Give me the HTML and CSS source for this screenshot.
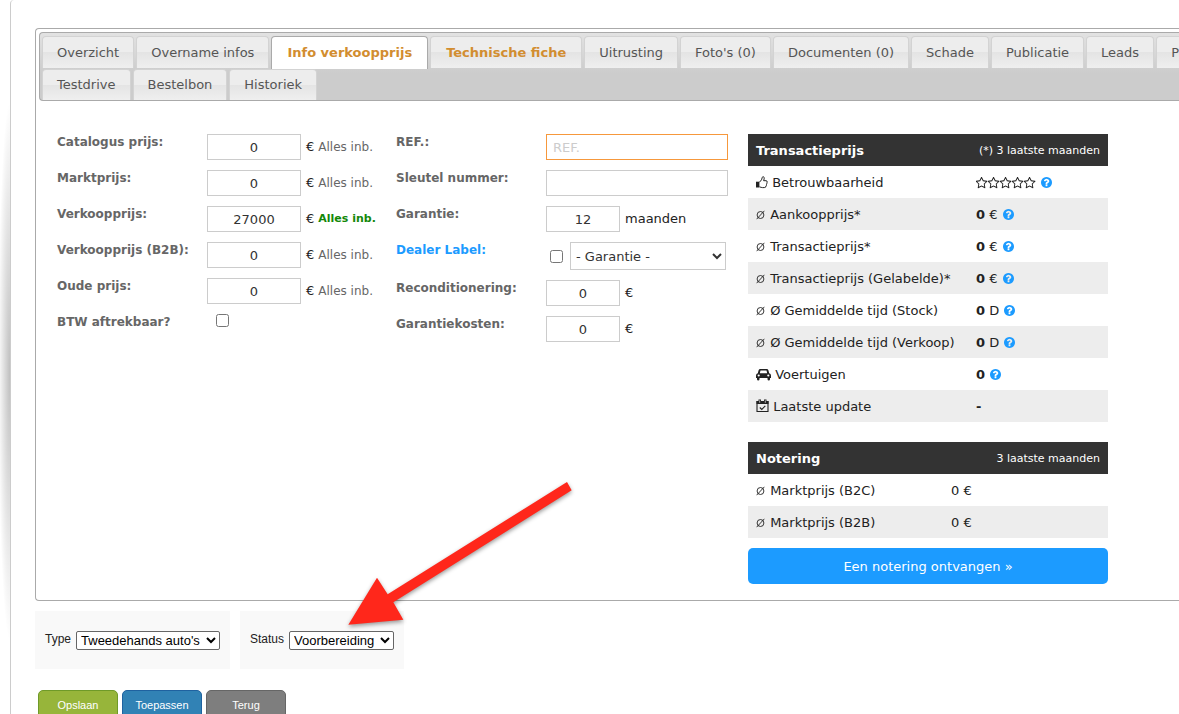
FILE: index.html
```html
<!DOCTYPE html>
<html lang="nl">
  <head>
    <meta charset="UTF-8" />
    <meta name="viewport" content="width=device-width, initial-scale=1.0" />
    <title>Info verkoopprijs</title>
    <link rel="stylesheet" href="styles.css">
  </head>
  <body>
    <!-- Iconen -->
    <svg class="sprite" aria-hidden="true">
      <symbol id="star" viewBox="64 64 1664 1664">
        <path d="M1137 1004l306-297-422-62-189-382-189 382-422 62 306 297-73 421 378-199 377 199zm527-357q0 22-26 48l-363 354 86 500q1 7 1 20 0 50-41 50-19 0-40-12l-449-236-449 236q-22 12-40 12-21 0-31.500-14.500t-10.500-35.500q0-6 2-20l86-500-364-354q-25-27-25-48 0-37 56-46l502-73 225-455q19-41 49-41t49 41l225 455 502 73q56 9 56 46z" />
      </symbol>
      <symbol id="help" viewBox="128 128 1536 1536">
        <path d="M1024 1376v-192q0-14-9-23t-23-9h-192q-14 0-23 9t-9 23v192q0 14 9 23t23 9h192q14 0 23-9t9-23zm256-672q0-88-55.500-163t-138.500-116-170-41q-243 0-371 213-15 24 8 42l132 100q7 6 19 6 16 0 25-12 53-68 86-92 34-24 86-24 48 0 85.500 26t37.500 59q0 38-20 61t-68 45q-63 28-115.500 86.500t-52.500 125.500v36q0 14 9 23t23 9h192q14 0 23-9t9-23q0-19 21.500-49.500t54.500-49.500q32-18 49-28.500t46-35 44.500-48 28-60.500 12.500-81zm384 192q0 209-103 385.500t-279.500 279.500-385.500 103-385.500-103-279.500-279.500-103-385.500 103-385.500 279.500-279.500 385.500-103 385.500 103 279.500 279.500 103 385.500z" />
      </symbol>
      <symbol id="avg" viewBox="0 0 9 10">
        <ellipse cx="4.500" cy="5" rx="3.400" ry="3.500" fill="none" stroke="currentColor" stroke-width="0.900" />
        <path d="M0.600 9.200L8.400 0.800" stroke="currentColor" stroke-width="0.900" />
      </symbol>
      <symbol id="thumb" viewBox="0 0 12 13">
        <path d="M3.500 6.200L5.500 3.800L6.300 1.400Q6.500 .6 7.200 .7Q8.600 1 8.200 2.800L7.600 4.700H10Q11.300 4.800 11.200 6Q11.100 6.700 10.700 7Q11.100 7.800 10.500 8.500Q10.700 9.400 10 10Q10 11.600 8.300 11.600H6.500Q5.200 11.500 3.500 10.800" fill="none" stroke="currentColor" />
        <path d="M0 5.700H3.400V11.500H0Z" />
      </symbol>
      <symbol id="car" viewBox="0 0 15 13">
        <path fill-rule="evenodd" d="M4.300 1H10.700Q12 1 12.400 2.300L13.200 5.300Q15 5.600 15 7.400V10H14V11.200Q13.900 12.400 12.800 12.400Q11.600 12.400 11.500 11.200V10H3.500V11.200Q3.400 12.400 2.200 12.400Q1.100 12.400 1 11.200V10H0V7.400Q0 5.600 1.800 5.300L2.600 2.300Q3 1 4.300 1ZM4.500 2.600L3.800 5.200H11.200L10.500 2.600ZM2.700 6.400A1.100 1.100 0 1 0 2.700 8.600A1.100 1.100 0 1 0 2.700 6.400ZM12.300 6.400A1.100 1.100 0 1 0 12.300 8.600A1.100 1.100 0 1 0 12.300 6.400Z" />
      </symbol>
      <symbol id="calendar" viewBox="0 0 13 14">
        <path d="M1 2.500H12V12.500H1Z" fill="none" stroke="currentColor" stroke-width="1.100" />
        <path d="M.5 2H12.500V5H.5ZM2.500 .5H5V3H2.500ZM8 .5H10.500V3H8Z" />
        <path d="M3.700 1.300V3.800M9.300 1.300V3.800" stroke="#ededed" stroke-width=".7" />
        <path d="M3.800 8.500L5.800 10.500L9.300 6.900" fill="none" stroke="currentColor" stroke-width="1.100" />
      </symbol>
    </svg>

    <div class="page">
      <div class="tabs">
        <!-- Tabbladen -->
        <nav class="tabs-nav">
          <ul class="tab-row tab-row-main">
            <li><a href="#overzicht">Overzicht</a></li>
            <li><a href="#overname">Overname infos</a></li>
            <li class="active"><a href="#verkoopprijs">Info verkoopprijs</a></li>
            <li class="required"><a href="#fiche">Technische fiche</a></li>
            <li><a href="#uitrusting">Uitrusting</a></li>
            <li><a href="#fotos">Foto's (0)</a></li>
            <li><a href="#documenten">Documenten (0)</a></li>
            <li><a href="#schade">Schade</a></li>
            <li><a href="#publicatie">Publicatie</a></li>
            <li><a href="#leads">Leads</a></li>
            <li><a href="#p">P</a></li>
          </ul>
          <ul class="tab-row">
            <li><a href="#testdrive">Testdrive</a></li>
            <li><a href="#bestelbon">Bestelbon</a></li>
            <li><a href="#historiek">Historiek</a></li>
          </ul>
        </nav>

        <div class="tab-panel" id="verkoopprijs">
          <!-- Prijzen -->
          <div class="form-column prices">
            <div class="form-row">
              <label for="catalogus">Catalogus prijs:</label>
              <div class="field"><input type="text" class="price" id="catalogus" value="0" /> € <span class="vat">Alles inb.</span></div>
            </div>
            <div class="form-row">
              <label for="markt">Marktprijs:</label>
              <div class="field"><input type="text" class="price" id="markt" value="0" /> € <span class="vat">Alles inb.</span></div>
            </div>
            <div class="form-row">
              <label for="verkoop">Verkoopprijs:</label>
              <div class="field"><input type="text" class="price" id="verkoop" value="27000" /> € <span class="vat vat-active">Alles inb.</span></div>
            </div>
            <div class="form-row">
              <label for="verkoop-b2b">Verkoopprijs (B2B):</label>
              <div class="field"><input type="text" class="price" id="verkoop-b2b" value="0" /> € <span class="vat">Alles inb.</span></div>
            </div>
            <div class="form-row">
              <label for="oude">Oude prijs:</label>
              <div class="field"><input type="text" class="price" id="oude" value="0" /> € <span class="vat">Alles inb.</span></div>
            </div>
            <div class="form-row">
              <label for="btw">BTW aftrekbaar?</label>
              <div class="field check-field"><input type="checkbox" id="btw" /></div>
            </div>
          </div>

          <!-- Garantie en kosten -->
          <div class="form-column details">
            <div class="form-row">
              <label for="ref">REF.:</label>
              <div class="field"><input type="text" class="wide highlight" id="ref" placeholder="REF." /></div>
            </div>
            <div class="form-row">
              <label for="sleutel">Sleutel nummer:</label>
              <div class="field"><input type="text" class="wide" id="sleutel" /></div>
            </div>
            <div class="form-row">
              <label for="garantie">Garantie:</label>
              <div class="field"><input type="text" class="short" id="garantie" value="12" /> maanden</div>
            </div>
            <div class="form-row">
              <label for="dealer" class="link-label">Dealer Label:</label>
              <div class="field dealer-field">
                <input type="checkbox" id="dealer" />
                <select class="warranty" aria-label="Garantie label"><option>- Garantie -</option></select>
              </div>
            </div>
            <div class="form-row">
              <label for="recond">Reconditionering:</label>
              <div class="field"><input type="text" class="short" id="recond" value="0" /> €</div>
            </div>
            <div class="form-row">
              <label for="kosten">Garantiekosten:</label>
              <div class="field"><input type="text" class="short" id="kosten" value="0" /> €</div>
            </div>
          </div>

          <!-- Marktgegevens -->
          <div class="market">
            <table class="market-table transactions">
              <thead>
                <tr><th>Transactieprijs</th><th class="period">(*) 3 laatste maanden</th></tr>
              </thead>
              <tbody>
                <tr>
                  <td><svg class="icon-thumb"><use href="#thumb" /></svg> Betrouwbaarheid</td>
                  <td><span class="stars"><svg><use href="#star" /></svg><svg><use href="#star" /></svg><svg><use href="#star" /></svg><svg><use href="#star" /></svg><svg><use href="#star" /></svg></span> <svg class="icon-help"><use href="#help" /></svg></td>
                </tr>
                <tr>
                  <td><svg class="icon-avg"><use href="#avg" /></svg> Aankoopprijs*</td>
                  <td><b>0</b> € <svg class="icon-help"><use href="#help" /></svg></td>
                </tr>
                <tr>
                  <td><svg class="icon-avg"><use href="#avg" /></svg> Transactieprijs*</td>
                  <td><b>0</b> € <svg class="icon-help"><use href="#help" /></svg></td>
                </tr>
                <tr>
                  <td><svg class="icon-avg"><use href="#avg" /></svg> Transactieprijs (Gelabelde)*</td>
                  <td><b>0</b> € <svg class="icon-help"><use href="#help" /></svg></td>
                </tr>
                <tr>
                  <td><svg class="icon-avg"><use href="#avg" /></svg> Ø Gemiddelde tijd (Stock)</td>
                  <td><b>0</b> D <svg class="icon-help"><use href="#help" /></svg></td>
                </tr>
                <tr>
                  <td><svg class="icon-avg"><use href="#avg" /></svg> Ø Gemiddelde tijd (Verkoop)</td>
                  <td><b>0</b> D <svg class="icon-help"><use href="#help" /></svg></td>
                </tr>
                <tr>
                  <td><svg class="icon-car"><use href="#car" /></svg> Voertuigen</td>
                  <td><b>0</b> <svg class="icon-help"><use href="#help" /></svg></td>
                </tr>
                <tr>
                  <td><svg class="icon-calendar"><use href="#calendar" /></svg> Laatste update</td>
                  <td><b>-</b></td>
                </tr>
              </tbody>
            </table>

            <table class="market-table quotes">
              <thead>
                <tr><th>Notering</th><th class="period">3 laatste maanden</th></tr>
              </thead>
              <tbody>
                <tr><td><svg class="icon-avg"><use href="#avg" /></svg> Marktprijs (B2C)</td><td>0 €</td></tr>
                <tr><td><svg class="icon-avg"><use href="#avg" /></svg> Marktprijs (B2B)</td><td>0 €</td></tr>
              </tbody>
            </table>

            <button type="button" class="quote-button">Een notering ontvangen »</button>
          </div>
        </div>
      </div>

      <!-- Type en status -->
      <div class="options">
        <div class="option-box">
          <label for="type">Type</label>
          <select id="type" class="type-select"><option>Tweedehands auto's</option></select>
        </div>
        <div class="option-box">
          <label for="status">Status</label>
          <select id="status" class="status-select"><option>Voorbereiding</option></select>
        </div>
      </div>

      <div class="actions">
        <button type="submit" class="save">Opslaan</button>
        <button type="button" class="apply">Toepassen</button>
        <button type="button" class="back">Terug</button>
      </div>
    </div>

    <!-- Pijl naar de status -->
    <svg class="arrow" viewBox="0 0 750 510" aria-hidden="true">
      <path d="M25 464L111 323L143 373L681 36L695 61L160 397L190 449Z" />
    </svg>
  </body>
</html>
```

FILE: styles.css
```css
* {
  box-sizing: border-box;
}

body {
  position: relative;
  margin: 0;
  height: 100vh;
  overflow: hidden;
  background: radial-gradient(ellipse 12px 270px at 10px 52%, rgba(0, 0, 0, 0.25), transparent) #fff;
  color: #222;
  font: 13px/16px Verdana, "DejaVu Sans", sans-serif;
}

.sprite {
  display: none;
}

svg {
  fill: currentColor;
}

.page {
  min-height: 100vh;
  margin-left: 10px;
  padding: 28px 0 0 24px;
  border-left: 1px solid #ccc;
  border-top-left-radius: 4px;
  background: #fff;
}

/* tabs */
.tabs {
  padding: 3px 0 0 3px;
  border: 1px solid #aaa;
  border-right: none;
  border-radius: 4px 0 0 4px;
}

.tabs-nav {
  display: flex;
  flex-direction: column;
  gap: 1px;
  padding: 3px 0 0 2px;
  border: 1px solid #aaa;
  border-right: none;
  border-radius: 4px 0 0 4px;
  background: linear-gradient(#e2e2e2, #ccc 60%);
  overflow: hidden;
}

.tab-row {
  display: flex;
  gap: 2px;
  margin: 0;
  padding: 0;
  list-style: none;
}

.tab-row li {
  flex: none;
  height: 31px;
  border: 1px solid #d3d3d3;
  border-bottom: none;
  border-radius: 4px 4px 0 0;
  background: linear-gradient(#ededed 50%, #e4e4e4 50%, #efefef);
}

.tab-row a {
  display: block;
  padding: 7px 14px;
  color: #555;
  text-decoration: none;
}

.tab-row-main li {
  height: 32px;
}

.tab-row-main a {
  padding-top: 8px;
}

.tab-row .active {
  height: 33px;
  margin-bottom: -1px;
  border-color: #aaa;
  background: #fff;
}

.tab-row .active a,
.tab-row .required a {
  padding-left: 15px;
  padding-right: 15px;
  color: #d28d30;
  font-weight: bold;
}

/* formulier */
.tab-panel {
  display: flex;
  align-items: flex-start;
  padding: 33px 0 16px 18px;
}

.form-column {
  display: flex;
  flex-direction: column;
  gap: 10px;
}

.prices {
  width: 339px;
}

.details {
  width: 352px;
}

.form-row {
  display: flex;
  align-items: flex-start;
}

.form-row label {
  width: 150px;
  color: #666;
  font-size: 12px;
  font-weight: bold;
}

.form-row .link-label {
  color: #1c9bff;
}

.field {
  display: flex;
  align-items: center;
  gap: 5px;
  line-height: 18px;
}

.field input,
.field select {
  margin: 0;
  font: inherit;
  color: #333;
}

.field input[type="text"] {
  height: 26px;
  padding: 0 6px;
  border: 1px solid #ccc;
  background: #fff;
}

.field .price {
  width: 94px;
  text-align: center;
}

.field .short {
  width: 74px;
  text-align: center;
}

.field .wide {
  width: 182px;
}

.field input.highlight {
  border-color: #f6983c;
}

.field ::placeholder {
  color: #ccc;
}

.vat {
  color: #666;
  font-size: 12px;
  margin-left: -1px;
}

.vat-active {
  color: #138808;
  font-size: 11px;
  font-weight: bold;
}

.check-field {
  padding-left: 9px;
}

.dealer-field {
  padding-left: 4px;
  gap: 7px;
}

.field .warranty {
  width: 156px;
  height: 28px;
  padding: 0 1px;
  border: 1px solid #ccc;
  background: #fff;
}

/* markttabellen */
.market {
  width: 360px;
}

.market-table {
  width: 100%;
  margin-bottom: 20px;
  border-collapse: collapse;
  table-layout: fixed;
}

.market-table th {
  height: 32px;
  padding: 2px 8px 0;
  background: #333;
  color: #fff;
  text-align: left;
  white-space: nowrap;
}

.market-table .period {
  font-size: 11px;
  font-weight: normal;
  text-align: right;
}

.market-table td {
  height: 32px;
  padding: 2px 0 0 8px;
  white-space: nowrap;
}

.market-table tbody tr:nth-child(even) {
  background: #ededed;
}

.transactions th:first-child {
  width: 220px;
}

.quotes {
  margin-bottom: 10px;
}

.quotes th:first-child {
  width: 195px;
}

.market-table svg {
  vertical-align: -2px;
}

.market-table .icon-avg {
  width: 9px;
  height: 10px;
  margin-right: 1px;
  vertical-align: -1px;
}

.icon-thumb {
  width: 12px;
  height: 13px;
}

.icon-car {
  width: 15px;
  height: 13px;
}

.icon-calendar {
  width: 13px;
  height: 14px;
}

.stars svg {
  width: 12px;
  height: 12px;
}

.market-table .icon-help {
  width: 11px;
  height: 11px;
  margin-left: 1px;
  color: #1c9bff;
  vertical-align: -1px;
}

.quote-button {
  width: 100%;
  height: 36px;
  padding: 1px 0 0;
  border: none;
  border-radius: 5px;
  background: #1c9bff;
  color: #fff;
  font: inherit;
}

/* opties en knoppen */
.options {
  display: flex;
  gap: 10px;
  margin-top: 10px;
  font: 12px/16px Arial, "Liberation Sans", sans-serif;
}

.option-box {
  display: flex;
  align-items: flex-start;
  gap: 5px;
  padding: 20px 10px 19px;
  background: #f9f9f9;
}

.option-box select {
  height: 19px;
  padding: 0;
  border: 1px solid #666;
  border-radius: 2px;
  background: #fff;
  color: #000;
  font: 13px Arial, "Liberation Sans", sans-serif;
}

.type-select {
  width: 144px;
}

.status-select {
  width: 105px;
}

.actions {
  display: flex;
  gap: 4px;
  margin: 21px 0 0 3px;
}

.actions button {
  width: 80px;
  height: 30px;
  border: 1px solid #6f9a28;
  border-radius: 5px;
  background: #97b53a;
  color: #fff;
  font: 11px Arial, "Liberation Sans", sans-serif;
}

.actions .apply {
  border-color: #1f62a0;
  background: #3182b5;
}

.actions .back {
  border-color: #666;
  background: #7e7e7e;
}

/* ligt over de pagina heen */
.arrow {
  position: absolute;
  top: 470px;
  left: 340px;
  width: 250px;
  height: 170px;
  fill: #ff271b;
  filter: drop-shadow(0 2px 2px rgba(0, 0, 0, 0.4));
  pointer-events: none;
}
```
